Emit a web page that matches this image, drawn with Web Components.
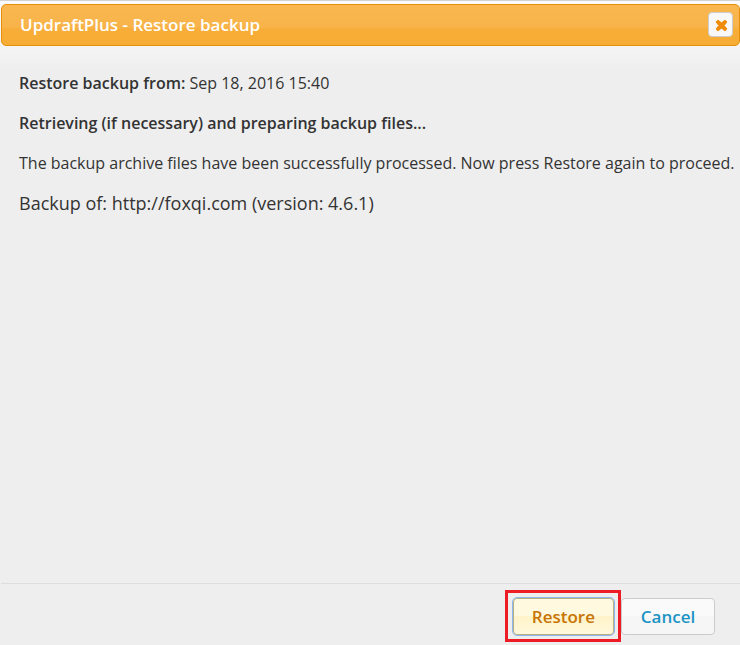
<!DOCTYPE html>
<html lang="en">
<head>
<meta charset="utf-8">
<title>UpdraftPlus - Restore backup</title>
<style>
    body {
        margin: 0;
        background: #eee;
        font-family: "Open Sans", "Noto Sans", sans-serif;
        color: #333;
    }
</style>
</head>
<body>
<restore-dialog>
    <dialog-titlebar slot="title">UpdraftPlus - Restore backup</dialog-titlebar>

    <restore-log></restore-log>

    <dialog-button slot="buttons" kind="focused" marked>Restore</dialog-button>
    <dialog-button slot="buttons">Cancel</dialog-button>
</restore-dialog>

<script>
class RestoreDialog extends HTMLElement {
    connectedCallback() {
        const shadow = this.attachShadow({ mode: "open" });

        shadow.innerHTML = `
        <style>
            :host {
                display: flex;
                flex-direction: column;
                box-sizing: border-box;
                min-height: 100vh;
                padding: 3px 0 0 1px;
                border-top: 1px solid #d3d3d3;
                background: linear-gradient(#fafafa 0, #f5f5f5 44px, #eee 70px);
            }

            main {
                flex: 1;
                padding: 25px 4px 24px 18px;
            }

            footer {
                display: flex;
                justify-content: flex-end;
                gap: 7px;
                padding: 14px 25px 10px;
                border-top: 1px solid #ddd;
            }
        </style>

        <slot name="title"></slot>
        <main><slot></slot></main>
        <footer><slot name="buttons"></slot></footer>`;
    }
}

customElements.define("restore-dialog", RestoreDialog);

class DialogTitlebar extends HTMLElement {
    connectedCallback() {
        const shadow = this.attachShadow({ mode: "open" });

        shadow.innerHTML = `
        <style>
            :host {
                display: flex;
                align-items: center;
                justify-content: space-between;
                box-sizing: border-box;
                height: 42px;
                padding: 0 6px 1px 18px;
                border: 1px solid #e78f08;
                border-radius: 5px;
                background: #f6a828;
                background: linear-gradient(#f9b750 0, #f8b44a 55%, #f7ad37 60%, #f7ac35 100%);
                color: #fff;
            }

            h1 {
                margin: 0;
                font-size: 17px;
                line-height: 24px;
                font-weight: 600;
            }

            button {
                display: flex;
                align-items: center;
                justify-content: center;
                width: 25px;
                height: 25px;
                padding: 1px 0 0 1px;
                border: 1px solid #ccc;
                border-radius: 4px;
                background: #f8f8f8;
                color: #ef8c08;
            }
        </style>

        <h1><slot></slot></h1>
        <button type="button" aria-label="Close">
            <svg width="13" height="13" viewBox="0 0 13 13" aria-hidden="true">
                <path d="M3 1.5 L6.5 4.3 L10 1.5 L11.5 3 L8.7 6.5 L11.5 10 L10 11.5 L6.5 8.7 L3 11.5 L1.5 10 L4.3 6.5 L1.5 3 Z" fill="currentColor" stroke="currentColor" stroke-width="1.4" stroke-linejoin="round"/>
            </svg>
        </button>`;
    }
}

customElements.define("dialog-titlebar", DialogTitlebar);

class RestoreLog extends HTMLElement {
    connectedCallback() {
        const shadow = this.attachShadow({ mode: "open" });

        shadow.innerHTML = `
        <style>
            :host {
                display: block;
                font-size: 16px;
                line-height: 24px;
            }

            p {
                margin: 0 0 16px;
            }

            strong {
                font-weight: 600;
            }

            .source {
                font-size: 18px;
            }
        </style>

        <p><strong>Restore backup from:</strong> Sep 18, 2016 15:40</p>
        <p><strong>Retrieving (if necessary) and preparing backup files...</strong></p>
        <p>The backup archive files have been successfully processed. Now press Restore again to proceed.</p>
        <p class="source">Backup of: http://foxqi.com (version: 4.6.1)</p>`;
    }
}

customElements.define("restore-log", RestoreLog);

class DialogButton extends HTMLElement {
    connectedCallback() {
        const shadow = this.attachShadow({ mode: "open" });

        shadow.innerHTML = `
        <style>
            :host {
                display: block;
                position: relative;
            }

            button {
                display: block;
                height: 37px;
                min-width: 94px;
                padding: 0 18px;
                border: 1px solid #ccc;
                border-radius: 4px;
                background: linear-gradient(#fafafa 50%, #f6f6f6 50%);
                color: #1c94c4;
                font-family: inherit;
                font-size: 17px;
                font-weight: 600;
            }

            :host([kind="focused"]) button {
                border-color: #b5b184;
                outline: 1px solid #8fb6f0;
                background: linear-gradient(#fff9e0 50%, #fff3c9 50%, #fff8dc 100%);
                color: #c77405;
            }

            /* red frame around the button to press */
            :host([marked])::after {
                content: "";
                position: absolute;
                inset: -8px -7px -7px -8px;
                border: 3px solid #ed1c24;
                pointer-events: none;
            }
        </style>

        <button type="button"><slot></slot></button>`;
    }
}

customElements.define("dialog-button", DialogButton);
</script>
</body>
</html>
